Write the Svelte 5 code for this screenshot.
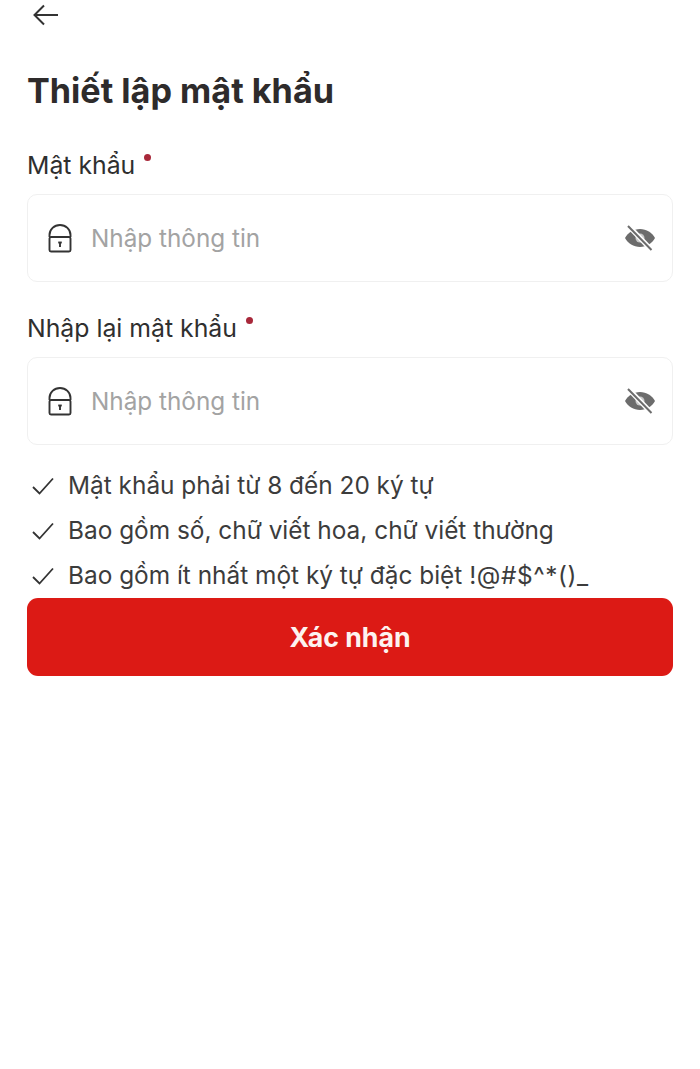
<script>
  const rules = [
    { text: 'Mật khẩu phải từ 8 đến 20 ký tự' },
    { text: 'Bao gồm số, chữ viết hoa, chữ viết thường' },
    { text: 'Bao gồm ít nhất một ký tự đặc biệt ', symbols: '!@#$^*()_' },
  ];
  const fields = ['Mật khẩu', 'Nhập lại mật khẩu'];
</script>

<main class="page">
  <button class="back" aria-label="Quay lại">
    <svg width="30" height="26" viewBox="0 0 30 26" fill="none" stroke="#333" stroke-width="2">
      <path d="M28 13H5M14 3.500 4.500 13l9.500 9.500" />
    </svg>
  </button>

  <h1>Thiết lập mật khẩu</h1>

  {#each fields as field}
    <label class="field">
      <span class="label">{field}<i class="req"></i></span>
      <span class="box">
        <svg class="lock" width="26" height="30" viewBox="0 0 26 30" fill="none" stroke="#333" stroke-width="1.900">
          <path d="M2.500 14V12a10.500 10 0 0 1 21 0V14" />
          <rect x="2.500" y="14" width="21" height="14.500" rx="1.500" />
          <path d="M13 19.500v4.500" />
          <path d="M11.200 19.500h3.600" />
        </svg>
        <input placeholder="Nhập thông tin" type="password" />
        <svg class="eye" width="32" height="28" viewBox="0 0 32 28">
          <path fill="#6c6c6c" d="M1 14C4 8.500 9.500 5 16 5s12 3.500 15 9c-3 5.500-8.500 9-15 9S4 19.500 1 14Z" />
          <circle cx="16" cy="14" r="4.500" fill="#c9c9c9" />
          <path d="M5 2.500 27 25.500" stroke="#fff" stroke-width="5" />
          <path d="M4 2 27.500 26" stroke="#6c6c6c" stroke-width="2" />
        </svg>
      </span>
    </label>
  {/each}

  <ul class="rules">
    {#each rules as rule}
      <li>
        <svg width="22" height="18" viewBox="0 0 22 18" fill="none" stroke="#333" stroke-width="1.800">
          <path d="M1 10 7.500 16.500 21 1.500" />
        </svg>
        <span class="rule-text">{rule.text}{#if rule.symbols}<span class="symbols">{rule.symbols}</span>{/if}</span>
      </li>
    {/each}
  </ul>

  <button class="submit">Xác nhận</button>
</main>

<style>
  :global(body) {
    margin: 0;
    background: #fff;
  }

  .page {
    display: flex;
    flex-direction: column;
    box-sizing: border-box;
    padding: 0 27px;
    min-height: 1069px;
    font-family: Inter, "Liberation Sans", sans-serif;
    color: #333;
  }

  .back {
    display: flex;
    align-self: flex-start;
    margin: 2px 0 0 3px;
    border: 0;
    background: none;
    padding: 0;
  }

  h1 {
    margin: 41px 0 0;
    font-size: 34.200px;
    line-height: 44px;
    font-weight: 700;
    color: #2e2b2b;
  }

  .field {
    display: flex;
    flex-direction: column;
  }

  .field + .field {
    margin-top: 30px;
  }

  h1 + .field {
    margin-top: 36px;
  }

  .label {
    display: flex;
    font-size: 24.800px;
    line-height: 32px;
    color: #2f2f2f;
  }

  .req {
    width: 7px;
    height: 7px;
    margin: 5px 0 0 9px;
    border-radius: 50%;
    background: #a8283a;
  }

  .box {
    display: flex;
    align-items: center;
    box-sizing: border-box;
    height: 88px;
    margin-top: 13px;
    border: 1.500px solid #f0f0f0;
    border-radius: 10px;
    padding: 0 16px 0 19px;
  }

  .lock {
    flex: none;
  }

  input {
    flex: 1;
    min-width: 0;
    margin-left: 18px;
    border: 0;
    outline: 0;
    padding: 0;
    font: inherit;
    font-size: 24.300px;
  }

  input::placeholder {
    color: #a3a3a3;
    opacity: 1;
  }

  .rules {
    display: flex;
    flex-direction: column;
    gap: 10px;
    margin: 23px 0 0;
    padding: 0;
    list-style: none;
  }

  .rules li {
    display: flex;
    align-items: center;
    gap: 14px;
    padding-left: 5px;
    font-size: 24.400px;
    line-height: 35px;
    color: #3c3c3c;
  }

  .symbols {
    letter-spacing: 0.600px;
  }

  .submit {
    height: 78px;
    margin-top: 5px;
    border: 0;
    border-radius: 11px;
    background: #dc1a15;
    font: inherit;
    font-size: 26.700px;
    font-weight: 700;
    color: #fdf3f0;
  }
</style>
